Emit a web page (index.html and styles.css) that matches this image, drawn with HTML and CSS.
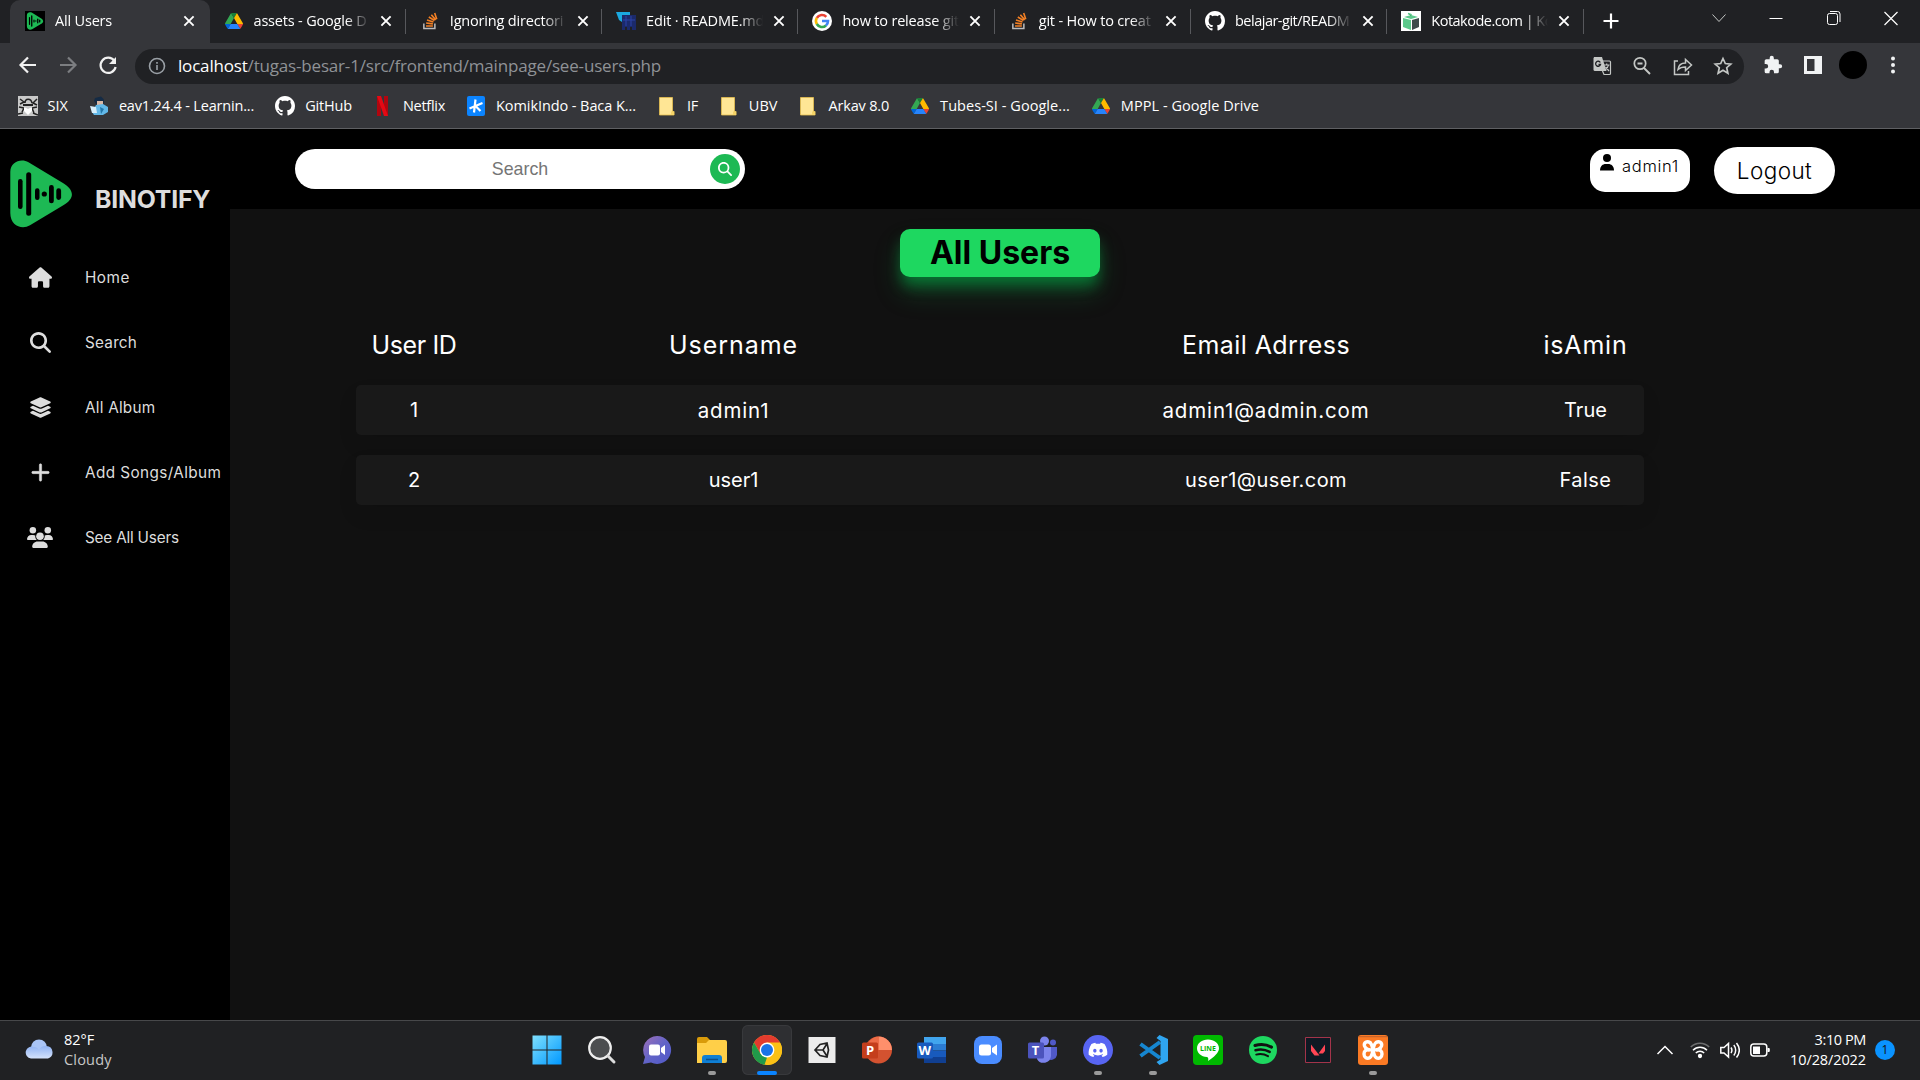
FILE: index.html
```html
<!DOCTYPE html>
<html lang="en">
<head>
<meta charset="utf-8">
<title>All Users</title>
<link rel="stylesheet" href="styles.css">
</head>
<body>
<svg class="defs" width="0" height="0">
  <defs>
    <symbol id="logo" viewBox="0 0 62 68"><path fill="#1db954" d="M.3 12C.3 2 11-2 18.5 2.3L51.7 22.3C65 30 65 38.5 53.3 45.3L20 65.3C12 70 .3 66 .3 53Z"/><g fill="#000"><rect x="8" y="19" width="4.6" height="30" rx="2.3"/><rect x="16.2" y="12.3" width="5" height="43.4" rx="2.5"/><rect x="25" y="28.3" width="4.5" height="11.7" rx="2.2"/><circle cx="34.3" cy="34" r="2.6"/><rect x="39" y="25" width="4.8" height="18.3" rx="2.4"/><rect x="46.3" y="28.3" width="4.8" height="11.7" rx="2.4"/></g></symbol>
    <symbol id="drive" viewBox="0 0 87.3 78"><path fill="#0066da" d="m6.6 66.85 3.85 6.65c.8 1.4 1.95 2.5 3.3 3.3l13.75-23.8h-27.5c0 1.55.4 3.1 1.2 4.5z"/><path fill="#34a853" d="m43.65 25-13.75-23.8c-1.35.8-2.5 1.9-3.3 3.3l-25.4 44a9.06 9.06 0 0 0-1.2 4.5h27.5z"/><path fill="#ea4335" d="m73.55 76.8c1.35-.8 2.5-1.9 3.3-3.3l1.6-2.75 7.65-13.25c.8-1.4 1.2-2.95 1.2-4.5h-27.502l5.852 11.5z"/><path fill="#188038" d="m43.65 25 13.75-23.8c-1.35-.8-2.9-1.2-4.5-1.2h-18.5c-1.6 0-3.15.45-4.5 1.2z"/><path fill="#2684fc" d="m59.8 53h-32.3l-13.75 23.8c1.35.8 2.9 1.2 4.5 1.2h50.8c1.6 0 3.15-.45 4.5-1.2z"/><path fill="#fb0" d="m73.4 26.5-12.7-22c-.8-1.4-1.95-2.5-3.3-3.3l-13.75 23.8 16.15 28h27.45c0-1.55-.4-3.1-1.2-4.5z"/></symbol>
    <symbol id="github" viewBox="0 0 16 16"><path fill="#fff" d="M8 0C3.58 0 0 3.58 0 8c0 3.54 2.29 6.53 5.47 7.59.4.07.55-.17.55-.38 0-.19-.01-.82-.01-1.49-2.01.37-2.53-.49-2.69-.94-.09-.23-.48-.94-.82-1.13-.28-.15-.68-.52-.01-.53.63-.01 1.08.58 1.23.82.72 1.21 1.87.87 2.33.66.07-.52.28-.87.51-1.07-1.78-.2-3.64-.89-3.64-3.95 0-.87.31-1.59.82-2.15-.08-.2-.36-1.02.08-2.12 0 0 .67-.21 2.2.82.64-.18 1.32-.27 2-.27s1.36.09 2 .27c1.53-1.04 2.2-.82 2.2-.82.44 1.1.16 1.92.08 2.12.51.56.82 1.27.82 2.15 0 3.07-1.87 3.75-3.65 3.95.29.25.54.73.54 1.48 0 1.07-.01 1.93-.01 2.2 0 .21.15.46.55.38A8.01 8.01 0 0 0 16 8c0-4.42-3.58-8-8-8z"/></symbol>
    <symbol id="stack" viewBox="0 0 20 20"><path fill="none" stroke="#bcbbbb" stroke-width="1.6" d="M3 12.5V18h11.6v-5.5"/><g stroke="#f48024" stroke-width="1.7"><path d="M5.3 15.3h7.2M5.4 12.1l7.1.9M6.3 8.9l6.8 2.1M8.2 5.8l6 3.7M10.9 3.4l4.6 5.4M14.4 1.6l2.2 6.6"/></g></symbol>
    <symbol id="folder" viewBox="0 0 20 20"><path fill="#ffe695" stroke="#e8c04f" stroke-width=".8" d="M2.500 1.500h13v14h1.600V19H2.500z"/><path fill="#f6d468" d="M14 15.500h3V19h-3z"/></symbol>
    <symbol id="x" viewBox="0 0 12 12"><path stroke="#fff" stroke-width="1.9" d="M1.4 1.4l9.2 9.2M10.6 1.4l-9.2 9.2"/></symbol>
    <symbol id="find" viewBox="0 0 512 512"><path d="M416 208c0 45.9-14.9 88.3-40 122.7L502.6 457.4c12.5 12.5 12.5 32.8 0 45.3s-32.8 12.5-45.3 0L330.7 376c-34.4 25.2-76.8 40-122.7 40C93.1 416 0 322.9 0 208S93.1 0 208 0S416 93.1 416 208zM208 352a144 144 0 1 0 0-288 144 144 0 1 0 0 288z"/></symbol>
  </defs>
</svg>

<header class="browser">
  <div class="tabs">
    <div class="tab active"><span class="fav black"><svg width="18" height="18"><use href="#logo"/></svg></span><span class="title">All Users</span><svg class="close"><use href="#x"/></svg></div>
    <div class="tab"><svg class="fav"><use href="#drive" x="1" y="1" width="18" height="18"/></svg><span class="title">assets - Google D</span><svg class="close"><use href="#x"/></svg></div>
    <div class="tab"><svg class="fav inset"><use href="#stack"/></svg><span class="title">Ignoring directori</span><svg class="close"><use href="#x"/></svg></div>
    <div class="tab"><svg class="fav" viewBox="0 0 20 20"><path fill="#1ba8e0" d="M0 1h14v4H6v6L3 9z"/><path fill="#1b2a6b" d="M6 4h14v15h-4v-3h-2v3h-3v-3H9v3H6z"/><path stroke="#2d43a8" d="M10 5v10M15 5v10M7 9h12"/></svg><span class="title">Edit · README.md</span><svg class="close"><use href="#x"/></svg></div>
    <div class="tab"><svg class="fav" viewBox="0 0 20 20"><circle cx="10" cy="10" r="10" fill="#fff"/><g fill="none" stroke-width="2.6"><path stroke="#ea4335" d="M4.800 7A6 6 0 0 1 14.300 5.800"/><path stroke="#fbbc05" d="M4.900 13.100A6 6 0 0 1 4.800 6.900"/><path stroke="#34a853" d="M14 14.500A6 6 0 0 1 4.800 13"/><path stroke="#4285f4" d="M10 10h6A6 6 0 0 1 13.900 14.600"/></g></svg><span class="title">how to release git</span><svg class="close"><use href="#x"/></svg></div>
    <div class="tab"><svg class="fav inset"><use href="#stack"/></svg><span class="title">git - How to creat</span><svg class="close"><use href="#x"/></svg></div>
    <div class="tab"><svg class="fav"><use href="#github"/></svg><span class="title dense">belajar-git/READM</span><svg class="close"><use href="#x"/></svg></div>
    <div class="tab"><svg class="fav" viewBox="0 0 20 20"><path fill="#fff" d="M0 0h20v20H0z"/><path fill="#5cc98b" d="M2 7l8 2v10l-8-3zM3 6l7-2 7 2-7 2z"/><path fill="#3d4a4a" d="M11 9l7-2v9l-7 3z"/><path stroke="#5cc98b" stroke-width="1.500" d="M7 2.500l3 1V5"/></svg><span class="title dense">Kotakode.com | Ko</span><svg class="close"><use href="#x"/></svg></div>
    <svg class="plus" viewBox="0 0 16 16"><path stroke="#fff" stroke-width="2.200" d="M8 .5v15M.5 8h15"/></svg>
    <div class="window">
      <svg viewBox="0 0 16 16"><path d="M1.500 4.500L8 11.500l6.500-7"/></svg>
      <svg viewBox="0 0 16 16"><path d="M1.500 8.500h13" stroke="#fff"/></svg>
      <svg viewBox="0 0 16 16"><rect x="1.500" y="3.500" width="10" height="11" rx="2" stroke="#fff"/><path stroke="#fff" d="M4 1.500h7.500a2.500 2.500 0 0 1 2.500 2.500V12"/></svg>
      <svg viewBox="0 0 16 16"><path d="M1.500 2l13 13M14.500 2l-13 13" stroke="#fff" stroke-width="1.200"/></svg>
    </div>
  </div>

  <div class="toolbar">
    <div class="nav">
      <svg viewBox="0 0 20 20"><path d="M18 10H3M10 2.500L2.500 10l7.500 7.500" stroke="#f1f1f1"/></svg>
      <svg viewBox="0 0 20 20"><path d="M2 10h15M10 2.500l7.500 7.500-7.500 7.500" stroke="#7c7e81"/></svg>
      <svg viewBox="0 0 20 20"><path d="M16.300 5.800A7.600 7.600 0 1 0 17.600 12" stroke="#f1f1f1"/><path fill="#f1f1f1" stroke="none" d="M18 2v7h-7z"/></svg>
    </div>
    <div class="omnibox">
      <svg class="info" viewBox="0 0 18 18"><circle cx="9" cy="9" r="7.500"/><path d="M9 8v5M9 5v1.800"/></svg>
      <span class="url"><b>localhost</b>/tugas-besar-1/src/frontend/mainpage/see-users.php</span>
      <div class="actions">
        <svg viewBox="0 0 20 20"><path fill="#c4c7c5" stroke="none" d="M2 1h8l4.500 14H3a1.500 1.500 0 0 1-1.500-1.500v-11z"/><path d="M11 5h6.500a1 1 0 0 1 1 1v11.500a1 1 0 0 1-1 1H12L10.500 15M12 9h5.500M14.700 7.500V9M16.500 9c-.5 2.500-2 4-3.500 5M13.500 11l3.500 4" stroke-width="1.200"/><path d="M8.300 6.500A2.500 2.500 0 1 0 8.500 8.500H6.500" stroke="#202124" stroke-width="1.300"/></svg>
        <svg viewBox="0 0 20 20"><circle cx="8" cy="7.500" r="5.700"/><path d="M12 12l6 6M5.500 7.500h5" stroke-width="1.900"/></svg>
        <svg viewBox="0 0 20 20"><path d="M5 5H1.500v13.500h14V15M5 13.500C5.500 9 8 7 12.500 7V3.500L18.500 9l-6 5.500V11C9 11 7 11.500 5 13.500z" stroke-width="1.500"/></svg>
        <svg viewBox="0 0 20 20"><path d="M10 2.500l2.300 5 5.500.6-4.100 3.600 1.200 5.500-4.900-2.900-4.900 2.900 1.200-5.500L2.200 8.100l5.500-.6z"/></svg>
      </div>
    </div>
    <div class="extras">
      <svg viewBox="0 0 24 24"><path fill="#f1f3f4" d="M20.500 11H19V7a2 2 0 0 0-2-2h-4V3.500a2.500 2.500 0 0 0-5 0V5H4a2 2 0 0 0-2 2v3.800h1.500a2.700 2.700 0 0 1 0 5.400H2V20a2 2 0 0 0 2 2h3.800v-1.500a2.700 2.700 0 0 1 5.400 0V22H17a2 2 0 0 0 2-2v-4h1.500a2.500 2.500 0 0 0 0-5z"/></svg>
      <svg viewBox="0 0 20 20"><path fill="#f1f3f4" fill-rule="evenodd" d="M1 1h18v18H1zM4 4v12h7.500V4z"/></svg>
      <i class="avatar"></i>
      <svg viewBox="0 0 20 20" fill="#f1f3f4"><circle cx="10" cy="3.500" r="2"/><circle cx="10" cy="10" r="2"/><circle cx="10" cy="16.500" r="2"/></svg>
    </div>
  </div>

  <nav class="bookmarks">
    <a><svg viewBox="0 0 20 20"><path fill="#c9c9c9" d="M0 0h20v20H0z"/><path fill="none" stroke="#222" stroke-width="1.500" d="M2 3l4 3-4 2M7 7c0-5 6-5 7 0M19 3l-4 4 4 2M1 11l5 1-2 4M19 11l-5 1 2 5M0 18l5-1M20 19l-5-2"/><path fill="#222" d="M5 8h10v2H5z"/><path fill="#fff" d="M6 11l4 2 4-2v4l-4 4-4-4z"/></svg><span>SIX</span></a>
    <a class="tight"><svg viewBox="0 0 20 20"><path fill="#142b45" d="M6 2l6-1.500 3 3v4L7 8 5 5z"/><path fill="#d8b7a5" d="M8 5h6v4H8z"/><path fill="#62b8e8" d="M7 9l7-1 5 3v5l-5 3H5l-2-3z"/><path fill="#d7eefb" d="M1 10l6 1 1 6H3z"/><path fill="#2478aa" d="M11 11l4 2-3 5z"/></svg><span>eav1.24.4 - Learnin...</span></a>
    <a class="tight"><svg><use href="#github"/></svg><span>GitHub</span></a>
    <a class="tighter"><svg viewBox="0 0 20 20"><path fill="#b1060f" d="M4 0h4v20H4zM11 0h4v20h-4z"/><path fill="#e50914" d="M4 0h4l7 20h-4z"/></svg><span>Netflix</span></a>
    <a class="snug"><svg viewBox="0 0 20 20"><rect x="1" width="18" height="20" rx="2" fill="#0b84ff"/><path fill="none" stroke="#fff" stroke-width="2.200" d="M9.500 3.500L8 16.500M3.500 12.500L16.500 7M10 10.500l4.500 4.500"/></svg><span>KomikIndo - Baca K...</span></a>
    <a class="tighter"><svg><use href="#folder"/></svg><span>IF</span></a>
    <a><svg><use href="#folder"/></svg><span>UBV</span></a>
    <a class="tight"><svg><use href="#folder"/></svg><span>Arkav 8.0</span></a>
    <a class="loose"><svg><use href="#drive" x="1" y="1" width="18" height="18"/></svg><span>Tubes-SI - Google...</span></a>
    <a class="loose"><svg><use href="#drive" x="1" y="1" width="18" height="18"/></svg><span>MPPL - Google Drive</span></a>
  </nav>
</header>

<div class="app">
  <aside class="sidebar">
    <div class="brand"><svg><use href="#logo"/></svg><strong>BINOTIFY</strong></div>
    <ul class="menu">
      <li class="home"><svg viewBox="0 0 576 512"><path d="M575.8 255.500c0 18-15 32.100-32 32.100h-32l.7 160.200c0 2.700-.2 5.400-.5 8.100V472c0 22.100-17.900 40-40 40H392c-22.100 0-40-17.900-40-40V384c0-17.700-14.300-32-32-32H256c-17.700 0-32 14.300-32 32v88c0 22.100-17.900 40-40 40H104c-22.100 0-40-17.900-40-40V287.600H32c-18 0-32-14-32-32.100c0-9 3-17 10-24L266.400 8c7-7 15-8 22-8s15 2 21 7L564.800 231.500c8 7 12 15 11 24z"/></svg><span>Home</span></li>
      <li class="find"><svg><use href="#find"/></svg><span>Search</span></li>
      <li class="albums"><svg viewBox="0 0 576 512"><path d="M264.500 5.200c14.900-6.900 32.100-6.900 47 0l218.600 101c8.500 3.900 13.900 12.400 13.900 21.800s-5.400 17.900-13.900 21.800l-218.600 101c-14.900 6.900-32.100 6.900-47 0L45.900 149.800C37.400 145.800 32 137.300 32 128s5.400-17.900 13.900-21.800L264.500 5.200zM476.900 209.600l53.200 24.600c8.500 3.900 13.900 12.400 13.900 21.800s-5.400 17.900-13.900 21.800l-218.600 101c-14.900 6.900-32.100 6.900-47 0L45.900 277.800C37.400 273.800 32 265.300 32 256s5.400-17.900 13.900-21.800l53.200-24.600 152 70.200c23.400 10.800 50.400 10.800 73.800 0l152-70.200zm-152 198.200l152-70.200 53.200 24.600c8.500 3.900 13.900 12.400 13.900 21.800s-5.400 17.900-13.900 21.800l-218.600 101c-14.900 6.900-32.100 6.900-47 0L45.900 405.800C37.400 401.800 32 393.300 32 384s5.400-17.900 13.900-21.800l53.200-24.600 152 70.200c23.400 10.800 50.400 10.800 73.800 0z"/></svg><span>All Album</span></li>
      <li class="add"><svg viewBox="0 0 20 20"><path d="M8.900 2.800a1.100 1.100 0 0 1 2.200 0V8.900h6.100a1.100 1.100 0 0 1 0 2.200h-6.100v6.100a1.100 1.100 0 0 1-2.200 0v-6.100H2.800a1.100 1.100 0 0 1 0-2.200h6.100z" stroke="#ddd" stroke-width=".5"/></svg><span>Add Songs/Album</span></li>
      <li><svg class="wide" viewBox="0 0 640 512"><circle cx="144" cy="80" r="80"/><circle cx="512" cy="80" r="80"/><circle cx="320" cy="224" r="94"/><path d="M0 300c0-62 45-108 106-108h43c20 0 38 5 56 14-8 46 8 86 40 114H21c-12 0-21-9-21-20zM640 300c0-62-45-108-106-108h-43c-20 0-38 5-56 14 8 46-8 86-40 114h224c12 0 21-9 21-20zM128 485c0-74 60-133 133-133h118c73 0 133 59 133 133 0 15-12 27-27 27H155c-15 0-27-12-27-27z"/></svg><span>See All Users</span></li>
    </ul>
  </aside>
  <main class="content">
    <div class="topbar">
      <label class="search"><span>Search</span><i><svg><use href="#find"/></svg></i></label>
      <div class="account">
        <span class="user"><svg viewBox="0 0 14 17"><circle cx="7" cy="4" r="4"/><path d="M0 16.500C0 12 3 10 5.500 10h3C11 10 14 12 14 16.500z"/></svg><span>admin1</span></span>
        <span class="logout">Logout</span>
      </div>
    </div>
    <h1>All Users</h1>
    <section class="table">
      <div class="row head"><span class="uid">User ID</span><span class="name">Username</span><span class="mail">Email Adrress</span><span class="flag">isAmin</span></div>
      <div class="row"><span>1</span><span class="spaced">admin1</span><span class="spaced">admin1@admin.com</span><span>True</span></div>
      <div class="row"><span>2</span><span>user1</span><span class="half">user1@user.com</span><span class="half">False</span></div>
    </section>
  </main>
</div>

<footer class="taskbar">
  <div class="weather">
    <svg viewBox="0 0 30 20"><defs><linearGradient id="cl" x2="0" y2="1"><stop stop-color="#8fb2f2"/><stop offset="1" stop-color="#d4e2fb"/></linearGradient></defs><circle cx="14" cy="8.500" r="8" fill="#a9c4f5"/><path fill="url(#cl)" d="M6 19.500a6 6 0 1 1 3-11.500c2 0 4 1 5 3 1.500-3 4-4.500 7.500-4a6.400 6.400 0 0 1 1.500 12.500z"/></svg>
    <div><span>82°F</span><span class="dim">Cloudy</span></div>
  </div>
  <div class="apps">
    <span><svg viewBox="0 0 30 30"><defs><linearGradient id="wn" x2="1" y2="1"><stop stop-color="#7fe0fd"/><stop offset="1" stop-color="#0098ff"/></linearGradient></defs><path fill="url(#wn)" d="M.5.500h14v14H.5zM15.500.500h14v14h-14zM.5 15.500h14v14H.5zM15.500 15.500h14v14h-14z"/></svg></span>
    <span><svg viewBox="0 0 30 30"><circle cx="13" cy="13" r="10.800" fill="#4c4e50" stroke="#eee" stroke-width="2.200"/><path stroke="#ddd" stroke-width="3" stroke-linecap="round" d="M21 21l6 6"/></svg></span>
    <span><svg viewBox="0 0 30 30"><defs><linearGradient id="ch" x2="1" y2="1"><stop stop-color="#a070b8"/><stop offset=".5" stop-color="#6264c7"/><stop offset="1" stop-color="#5059c9"/></linearGradient></defs><path fill="url(#ch)" d="M15 1a14 14 0 1 1-6 26.600L1 29l2-7A14 14 0 0 1 15 1z"/><rect x="7" y="9.500" width="11" height="11" rx="2" fill="#fff"/><path fill="#fff" d="M19 13l4-3v10l-4-3z"/></svg></span>
    <span class="run"><svg viewBox="0 0 30 30"><path fill="#d99b0a" d="M0 4a2 2 0 0 1 2-2h8l3 3-2 5H0z"/><path fill="#ffcf48" d="M0 8h9l3-3h16a2 2 0 0 1 2 2v19a2 2 0 0 1-2 2H0z"/><path fill="#0f7fd4" d="M5 28v-5a3 3 0 0 1 3-3h14a3 3 0 0 1 3 3v5z"/><path stroke="#0a4f8c" stroke-width="1.500" d="M9 24.500h12"/></svg></span>
    <span class="run current"><svg viewBox="0 0 30 30"><circle cx="15" cy="15" r="15" fill="#fbc116"/><path fill="#e33b2e" d="M2 7.500a15 15 0 0 1 26 0H15L8.500 18.700z"/><path fill="#219a4a" d="M2 7.500l6.500 11.200 6.500 3.800-2.500 7.300A15 15 0 0 1 2 7.500z"/><path fill="#fbc116" d="M21.500 18.700L28 7.500a15 15 0 0 1-14 22.500z"/><circle cx="15" cy="15" r="7.400" fill="#fff"/><circle cx="15" cy="15" r="6" fill="#1a73e8"/></svg></span>
    <span><svg viewBox="0 0 30 30"><path fill="#ececec" d="M1.500 2h27v26h-27z"/><path fill="none" stroke="#222" stroke-width="1.700" d="M8 15l5-5.500 7-1.500 1.500 7-1.500 7-7-1.500zM8 15h8l4.500-7M16 15l4.500 7"/></svg></span>
    <span><svg viewBox="0 0 30 30"><circle cx="16.500" cy="15" r="13.500" fill="#d35230"/><path fill="#ff8f6b" d="M16.500 1.500A13.500 13.500 0 0 1 30 15H16.500z"/><path fill="#ed6c47" d="M16.500 1.500V15H5a12 12 0 0 1 11.500-13.500z"/><rect y="7.500" width="16" height="16" rx="1.500" fill="#c43e1c"/><text x="4" y="20">P</text></svg></span>
    <span><svg viewBox="0 0 30 30"><path fill="#41a5ee" d="M7 2h22v7H7z"/><path fill="#2b7cd3" d="M7 9h22v6.500H7z"/><path fill="#185abd" d="M7 15.500h22V22H7z"/><path fill="#103f91" d="M7 22h22v6H7z"/><rect y="7.500" width="16" height="16" rx="1.500" fill="#185abd"/><text x="1.500" y="20">W</text></svg></span>
    <span><svg viewBox="0 0 30 30"><rect x="1" y="1" width="28" height="28" rx="8" fill="#4a8cff"/><rect x="6" y="9.500" width="12" height="11" rx="2.500" fill="#fff"/><path fill="#fff" d="M19 13l5-3.500v11L19 17z"/></svg></span>
    <span><svg viewBox="0 0 30 30"><circle cx="16.500" cy="6" r="4.500" fill="#7b83eb"/><circle cx="25" cy="7.500" r="3" fill="#5059c9"/><path fill="#5059c9" d="M20 12h9v8a6 6 0 0 1-9 4z"/><path fill="#7b83eb" d="M9 12h14v9a7.500 7.500 0 0 1-14 3z"/><rect y="7.500" width="16" height="16" rx="1.500" fill="#4b53bc"/><text x="3.800" y="20">T</text></svg></span>
    <span class="run"><svg viewBox="0 0 30 30"><circle cx="15" cy="15" r="15" fill="#5865f2"/><path fill="#fff" transform="translate(5.600 5.600) scale(.78)" d="M20.317 4.370a19.800 19.800 0 00-4.885-1.515.074.074 0 00-.079.037c-.21.375-.444.865-.608 1.250-1.845-.276-3.680-.276-5.487 0-.164-.393-.406-.874-.618-1.250a.077.077 0 00-.078-.037A19.740 19.740 0 003.677 4.370C.533 9.046-.319 13.580.1 18.058c2.084 1.564 4.072 2.479 6.024 3.086.5-.66.957-1.354 1.310-2.053-.694-.353-1.316-.655-1.914-.998l.456-.446c3.928 1.793 8.180 1.793 12.061 0l.451.429c-.598.360-1.220.645-1.880 1.010.36.698.772 1.363 1.309 2.022 1.961-.607 3.950-1.522 6.002-3.029.532-5.232-.807-9.729-3.602-13.709zM8.020 15.331c-1.183 0-2.157-1.086-2.157-2.419s.956-2.419 2.157-2.419c1.211 0 2.176 1.095 2.157 2.419 0 1.333-.956 2.419-2.157 2.419zm7.975 0c-1.183 0-2.157-1.086-2.157-2.419s.955-2.419 2.157-2.419c1.211 0 2.176 1.095 2.157 2.419 0 1.333-.946 2.419-2.157 2.419z"/></svg></span>
    <span class="run"><svg viewBox="0 0 30 30"><path fill="none" stroke="#1686cf" stroke-width="4" stroke-linejoin="round" d="M22 23L2.500 9M22 7L2.500 21"/><path fill="#2fa5f0" d="M21.500 0L30 4v22l-8.500 4-3-3 4-2.500V6l-4-3z"/></svg></span>
    <span><svg viewBox="0 0 30 30"><rect width="30" height="30" rx="4" fill="#00b900"/><path fill="#fff" d="M15 4.500c6 0 11 3.800 11 8.700 0 4.300-5 9-11 12.800.5-2 .5-3.500-1-4C8 21.500 4 18 4 13.200 4 8.300 9 4.500 15 4.500z"/><text class="line" x="7" y="16">LINE</text></svg></span>
    <span><svg viewBox="0 0 30 30"><circle cx="15" cy="15" r="14" fill="#1ed760"/><g fill="none" stroke="#111" stroke-linecap="round"><path stroke-width="3" d="M7 10.500c5.500-1.600 11.500-1.100 16.500 1.600"/><path stroke-width="2.500" d="M7.500 15.200c5-1.400 9.800-.8 14.200 1.700"/><path stroke-width="2" d="M8.200 19.600c4.200-1 8.200-.5 11.800 1.600"/></g></svg></span>
    <span><svg viewBox="0 0 30 30"><path fill="#0f1923" stroke="#a3344a" d="M2.500 2.500h25v25h-25z"/><path fill="#ff4655" d="M8 9.500l8.500 11h-5L8 16zM22 9.500V16l-2 2.500h-4.500z"/></svg></span>
    <span class="run"><svg viewBox="0 0 30 30"><rect width="30" height="30" rx="3" fill="#fb7a24"/><path fill="#c9642a" d="M1 1h28v1.200H1z"/><g fill="none" stroke="#fff" stroke-width="3.400" stroke-linecap="round" stroke-linejoin="round"><path d="M12 7.500c-3-2-6.500 0-5.500 3.500 1 3 4 4 8.500 4 4.500 0 7.500-1 8.500-4 1-3.500-2.500-5.500-5.500-3.500-2 1.500-2.300 4-3 7.500-.7 3.500-1 6-3 7.500-3 2-6 0-6-3.500 0-3 2-4.500 5-4"/><path d="M12.500 8c1.500 1.500 1.800 4 2.500 7s1 6 3 7.500c3 2 6 0 6-3.500 0-3-2-4.500-5-4"/></g></svg></span>
  </div>
  <div class="tray">
    <svg viewBox="0 0 20 20"><path d="M2.500 14L10 6.500l7.500 7.500"/></svg>
    <svg viewBox="0 0 20 20"><path opacity=".35" d="M.8 7a13 13 0 0 1 18.400 0"/><path d="M3 10.200a9.900 9.900 0 0 1 14 0M5.800 13a6 6 0 0 1 8.400 0"/><circle cx="10" cy="16" r="1.400" fill="#fff"/></svg>
    <svg viewBox="0 0 20 20"><path d="M.8 7.500H4l4.500-4v13.500l-4.500-4H.8zM11 7.500c1.200 1.800 1.200 3.700 0 5.500M13.800 5c2.500 3 2.500 7.500 0 10.500M16.500 3c3.500 4.500 3.500 10 0 14.500"/></svg>
    <svg viewBox="0 0 20 20"><rect x=".8" y="4" width="16" height="12" rx="3"/><path fill="#fff" stroke="none" d="M3 6.500h7v7.500H3zM17.500 8h1.300a1 1 0 0 1 1 1v2a1 1 0 0 1-1 1h-1.300z"/></svg>
    <div class="clock"><span class="time">3:10 PM</span><span>10/28/2022</span></div>
    <i class="badge">1</i>
  </div>
</footer>
</body>
</html>
```
FILE: styles.css
```css
* { box-sizing: border-box; }
body {
  margin: 0;
  width: 1920px;
  height: 1080px;
  overflow: hidden;
  display: flex;
  flex-direction: column;
  background: #000;
  color: #fff;
  font-family: "Open Sans", "Noto Sans", sans-serif;
}
svg { display: block; flex: none; }
.defs { display: none; }
b { font-weight: inherit; }
i { font-style: normal; }

/* browser window */
.browser { height: 129px; flex: none; background: #35363a; border-bottom: 1px solid #5f6063; font-size: 14.5px; }
.tabs { height: 43px; background: #202124; display: flex; padding-left: 10px; }
.tab { width: 196.3px; flex: none; height: 43px; padding: 0 13.5px 2px 14px; display: flex; align-items: center; position: relative; }
.tab:not(.active)::after { content: ""; position: absolute; right: 0; top: 9px; width: 1px; height: 25px; background: #57585c; }
.tab.active { width: 199.5px; background: #35363a; border-radius: 10px 10px 0 0; padding: 0 15px 2px; }
.fav { width: 20px; height: 20px; }
.fav.inset { padding-left: 1px; }
.fav.black { background: #000; padding: 1px; }
.title { flex: 1; min-width: 0; margin: 0 6px 0 10px; overflow: hidden; white-space: nowrap; line-height: 22px; letter-spacing: -.18px; -webkit-mask-image: linear-gradient(90deg, #000 calc(100% - 28px), transparent calc(100% - 4px)); mask-image: linear-gradient(90deg, #000 calc(100% - 28px), transparent calc(100% - 4px)); }
.title.dense { letter-spacing: -.5px; }
.close { width: 12px; height: 12px; }
.plus { width: 16px; height: 16px; margin: 13px 0 0 19.5px; }
.window { margin-left: auto; display: flex; gap: 41.3px; padding: 10px 21px 0 0; }
.window svg { width: 16px; height: 16px; fill: none; stroke: #c4c7c5; }

.toolbar { height: 44px; display: flex; align-items: center; padding-right: 17.5px; }
.nav { width: 135px; padding-left: 17.5px; display: flex; gap: 20px; }
.nav svg { width: 20px; height: 20px; fill: none; stroke-width: 2.2px; }
.omnibox { width: 1609px; height: 35px; margin-top: 2px; border-radius: 18px; background: #202124; display: flex; align-items: center; padding: 0 11px 0 13px; }
.info { width: 18px; height: 18px; fill: none; stroke: #9aa0a6; stroke-width: 1.6px; }
.url { margin-left: 12px; font-size: 17px; line-height: 24px; letter-spacing: -.18px; color: #8f9296; white-space: nowrap; }
.url b { color: #fff; }
.actions { margin-left: auto; display: flex; gap: 20.3px; }
.actions svg { width: 20px; height: 20px; fill: none; stroke: #c4c7c5; stroke-width: 1.7px; }
.extras { margin-left: auto; display: flex; align-items: center; }
.extras svg { width: 20px; height: 20px; }
.extras svg:first-child { margin-right: 20px; }
.avatar { width: 28px; height: 28px; margin: 0 15.5px 0 16.5px; border-radius: 50%; background: #000; }

.bookmarks { height: 38px; display: flex; gap: 21px; padding-left: 17.5px; align-items: center; }
.bookmarks a { display: flex; gap: 10px; align-items: center; white-space: nowrap; line-height: 22px; }
.bookmarks svg { width: 20px; height: 20px; }
.bookmarks .tight { letter-spacing: -.17px; }
.bookmarks .tighter { letter-spacing: -.28px; }
.bookmarks .snug { letter-spacing: -.08px; }
.bookmarks .loose { letter-spacing: .05px; }

/* music app */
.app { flex: 1; display: flex; font-family: Inter, "Open Sans", sans-serif; min-height: 0; }
.sidebar { width: 230px; flex: none; background: #000; color: #ddd; padding-top: 31px; }
.brand { display: flex; padding-left: 10px; height: 68px; }
.brand svg { width: 62px; height: 68px; }
.brand strong { margin: 24px 0 0 23px; font-size: 24.8px; line-height: 30px; letter-spacing: -.2px; }
.menu { list-style: none; margin: 17px 0 0; padding: 0; }
.menu li { height: 65px; display: flex; align-items: center; font-size: 15.3px; white-space: nowrap; }
.menu svg { width: 23px; height: 21px; margin: 0 33.5px 0 28.5px; fill: #ddd; }
.menu svg.wide { width: 26px; margin: 0 32px 0 27px; }
.menu .home { letter-spacing: .5px; }
.menu .find, .menu .albums { letter-spacing: .22px; }
.menu .add { letter-spacing: .4px; }
.menu li:last-child { letter-spacing: -.2px; }
.content { flex: 1; background: #111; }
.topbar { height: 80px; background: #000; padding: 20px 85px 0 65px; display: flex; justify-content: space-between; align-items: flex-start; }
.search { width: 450px; height: 40px; border-radius: 20px; background: #fff; color: #757575; display: flex; align-items: center; padding: 0 5px 0 35px; font: 17.8px/24px "Liberation Sans", sans-serif; }
.search span { flex: 1; text-align: center; }
.search i { width: 30px; height: 30px; border-radius: 50%; background: #1db954; display: grid; place-items: center; }
.search svg { width: 14px; height: 14px; fill: #fff; }
.account { display: flex; gap: 24px; color: #000; font-weight: 300; }
.user { width: 100px; height: 43px; border-radius: 15px; background: #fff; display: flex; padding: 5px 0 0 10px; font-size: 16.5px; line-height: 24px; letter-spacing: .7px; }
.user svg { width: 14px; height: 17px; margin-right: 8px; }
.logout { width: 121px; height: 47px; margin-top: -2px; border-radius: 24px; background: #fff; text-align: center; font-size: 22.5px; line-height: 47px; letter-spacing: .4px; }
h1 { width: 200px; height: 48px; margin: 20px auto 0 670px; border-radius: 10px; background: #1ed760; color: #000; text-align: center; font-size: 32px; line-height: 48px; box-shadow: 0 10px 14px -2px rgba(0, 170, 70, .55), 0 16px 26px rgba(20, 150, 70, .28); }
.table { width: 1288px; margin: 43px 0 0 126px; display: grid; gap: 20px; }
.row { height: 50px; display: grid; grid-template-columns: 116px 523px 532px 117px; align-items: center; text-align: center; font-size: 20px; background: #191919; border-radius: 5px; box-shadow: 0 10px 20px rgba(0, 0, 0, .08); }
.row span:nth-child(3) { padding-left: 10px; }
.row.head { height: 45px; padding-top: 4px; font-size: 25px; background: none; box-shadow: none; }
.uid { letter-spacing: -.35px; }
.name { letter-spacing: .94px; }
.mail, .half { letter-spacing: .43px; }
.flag { letter-spacing: .79px; }
.spaced { font-size: 20.5px; letter-spacing: .85px; }

/* desktop taskbar */
.taskbar { height: 60px; flex: none; background: #202123; border-top: 1px solid #47484a; display: grid; grid-template-columns: 522px 878px 1fr; font-size: 14.5px; }
.weather { display: flex; padding: 8.5px 0 0 25px; line-height: 20px; }
.weather svg { width: 30px; height: 20px; margin: 9px 9px 0 0; }
.weather div, .clock { display: flex; flex-direction: column; }
.dim { color: #c8c8c8; letter-spacing: .2px; }
.apps { display: flex; gap: 5.07px; padding-top: 4px; }
.apps > span { width: 50px; height: 50px; border-radius: 6px; display: grid; place-items: center; position: relative; }
.apps svg { width: 30px; height: 30px; }
.apps text { font: 700 13px "Open Sans", sans-serif; fill: #fff; }
.apps text.line { font-size: 7px; fill: #00b900; }
.run::after { content: ""; position: absolute; bottom: 0; left: 21px; width: 8px; height: 4px; border-radius: 2px; background: #9a9a9a; }
.apps .current { background: #2e2f32; box-shadow: inset 0 0 0 1px #38393c; }
.apps .current::after { left: 15px; width: 20px; background: #0a84ff; }
.tray { display: flex; justify-content: flex-end; padding-right: 25px; }
.tray svg { width: 20px; height: 20px; margin: 19px 10px 0 0; fill: none; stroke: #fff; stroke-width: 1.5px; }
.tray svg:first-child { margin-right: 15px; }
.clock { width: 86px; align-items: flex-end; padding-top: 8.5px; line-height: 20px; letter-spacing: -.1px; }
.time { letter-spacing: -.4px; }
.badge { width: 20px; height: 20px; margin: 19px 0 0 9px; border-radius: 50%; background: #0a93ff; color: #111; text-align: center; font-size: 12px; line-height: 20px; }
```
